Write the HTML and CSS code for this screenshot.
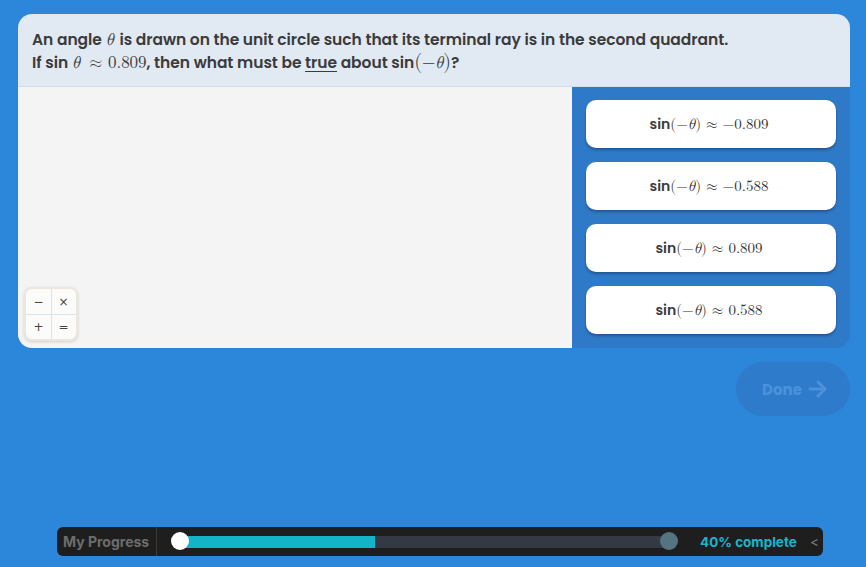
FILE: index.html
```html
<!DOCTYPE html>
<html>
<head>
<meta charset="utf-8">
<link rel="stylesheet" href="styles.css">
</head>
<body>
<div class="page">
  <div class="card">
    <div class="question">
      <p>An angle <span class="m it sp">θ</span> is drawn on the unit circle such that its terminal ray is in the second quadrant.</p>
      <p>If sin <span class="m it">θ</span> <span class="m">&nbsp;≈ 0.809</span>, then what must be <u>true</u> about sin<span class="m big">(</span><span class="m">−<i>θ</i></span><span class="m big">)</span>?</p>
    </div>
    <div class="body">
      <div class="work">
        <div class="calc">
          <span>−</span><span>×</span><span>+</span><span>=</span>
        </div>
      </div>
      <div class="answers">
        <button class="ans">sin<span class="m">(−<i>θ</i>) ≈ −0.809</span></button>
        <button class="ans">sin<span class="m">(−<i>θ</i>) ≈ −0.588</span></button>
        <button class="ans">sin<span class="m">(−<i>θ</i>) ≈ 0.809</span></button>
        <button class="ans">sin<span class="m">(−<i>θ</i>) ≈ 0.588</span></button>
      </div>
    </div>
  </div>
  <div class="actions">
    <button class="done">Done
      <svg width="20" height="18" viewBox="0 0 20 18"><path d="M2 9h15M10 2l7 7-7 7" fill="none" stroke="currentColor" stroke-width="3" stroke-linecap="round" stroke-linejoin="round"/></svg>
    </button>
  </div>
  <div class="progress">
    <div class="label">My Progress</div>
    <div class="track-wrap">
      <div class="track"><div class="fill"></div></div>
      <span class="knob start"></span>
      <span class="knob end"></span>
    </div>
    <div class="pct">40% complete</div>
    <div class="chev">&lt;</div>
  </div>
</div>
</body>
</html>
```
FILE: styles.css
```css
* { box-sizing: border-box; }
html, body { margin: 0; padding: 0; }
body {
  background: #2c86da;
  width: 866px;
  height: 567px;
  overflow: hidden;
  font-family: "Poppins", "Inter", "Noto Sans", sans-serif;
}
.page {
  padding: 14px 16px 0 18px;
  display: flex;
  flex-direction: column;
  height: 567px;
}
.card {
  width: 832px;
  height: 334px;
  border-radius: 14px;
  overflow: hidden;
  display: flex;
  flex-direction: column;
}
.question {
  background: #e1e9f3;
  height: 73px;
  padding: 14px 14px 0 14px;
  border-bottom: 1px solid #d4dbe4;
  color: #3b3b3b;
  font-size: 15.5px;
  font-weight: 600;
  letter-spacing: -0.04px;
}
.question p { margin: 0; line-height: 23px; }
.m {
  font-family: "Latin Modern Math", "DejaVu Serif", "Liberation Serif", serif;
  font-weight: 400;
  font-style: normal;
  font-size: 17px;
}
.m i, .m.it { font-style: italic; }
.m.sp { margin-right: 2px; }
.m.big { font-size: 20px; font-weight: 300; }
u { text-underline-offset: 3px; }
.body {
  flex: 1;
  display: flex;
}
.work {
  width: 555px;
  background: #f4f4f4;
  display: flex;
  align-items: flex-end;
  padding: 0 0 7px 6px;
}
.calc {
  width: 54px;
  height: 54px;
  border-radius: 8px;
  background: #fbfbfa;
  border: 2px solid #efe6d9;
  box-shadow: 0 1px 3px rgba(0,0,0,0.15);
  display: grid;
  grid-template-columns: 1fr 1fr;
  grid-template-rows: 1fr 1fr;
  font-family: "DejaVu Sans", sans-serif;
  font-size: 12px;
  color: #444;
  background-image: linear-gradient(#d6e4f2, #d6e4f2), linear-gradient(#d6e4f2, #d6e4f2);
  background-size: 1px 100%, 100% 1px;
  background-position: center, center;
  background-repeat: no-repeat;
}
.calc span { display: flex; align-items: center; justify-content: center; }
.answers {
  flex: 1;
  background: #2f7ac8;
  display: flex;
  flex-direction: column;
  gap: 14px;
  padding: 13px 14px 0 14px;
}
.ans {
  height: 48px;
  width: 250px;
  background: #fff;
  border: none;
  border-radius: 10px;
  box-shadow: 0 2px 3px rgba(0,0,40,0.3);
  font-family: "Poppins", "Inter", "Noto Sans", sans-serif;
  font-size: 14px;
  font-weight: 600;
  color: #3b3b3b;
  display: flex;
  align-items: center;
  justify-content: center;
  padding: 1px 4px 0 0;
}
.ans .m { font-size: 15px; color: #333; }
.actions {
  display: flex;
  justify-content: flex-end;
  padding-top: 14px;
}
.done {
  width: 114px;
  height: 54px;
  border-radius: 27px;
  border: none;
  background: #2f7bcb;
  color: #4b91db;
  font-family: "Poppins", "Inter", "Noto Sans", sans-serif;
  font-size: 15px;
  font-weight: 700;
  display: flex;
  align-items: center;
  justify-content: center;
  gap: 6px;
  padding-left: 10px;
}
.progress {
  margin-top: 111px;
  margin-left: 39px;
  width: 766px;
  height: 29px;
  background: #1e1e1e;
  border-radius: 6px;
  display: flex;
  align-items: center;
  font-family: "Inter", "Noto Sans", sans-serif;
  font-weight: 700;
  font-size: 13.5px;
}
.label {
  color: #6d6d6d;
  width: 100px;
  height: 100%;
  border-right: 1px solid #3a3a3a;
  display: flex;
  align-items: center;
  padding-left: 6px;
  font-size: 14px;
}
.track-wrap {
  position: relative;
  width: 512px;
  height: 100%;
  margin-left: 13px;
  display: flex;
  align-items: center;
}
.track {
  width: 490px;
  height: 12px;
  margin-left: 10px;
  background: #343a43;
}
.fill { width: 195px; height: 100%; background: #14b4c8; }
.knob {
  position: absolute;
  top: 5px;
  width: 18px;
  height: 18px;
  border-radius: 50%;
}
.knob.start { left: 1px; background: #fff; }
.knob.end { left: 490px; background: #547482; }
.pct {
  color: #17b6cc;
  margin-left: 18px;
  width: 110px;
}
.chev {
  color: #7d7d7d;
  font-weight: 400;
}
```
